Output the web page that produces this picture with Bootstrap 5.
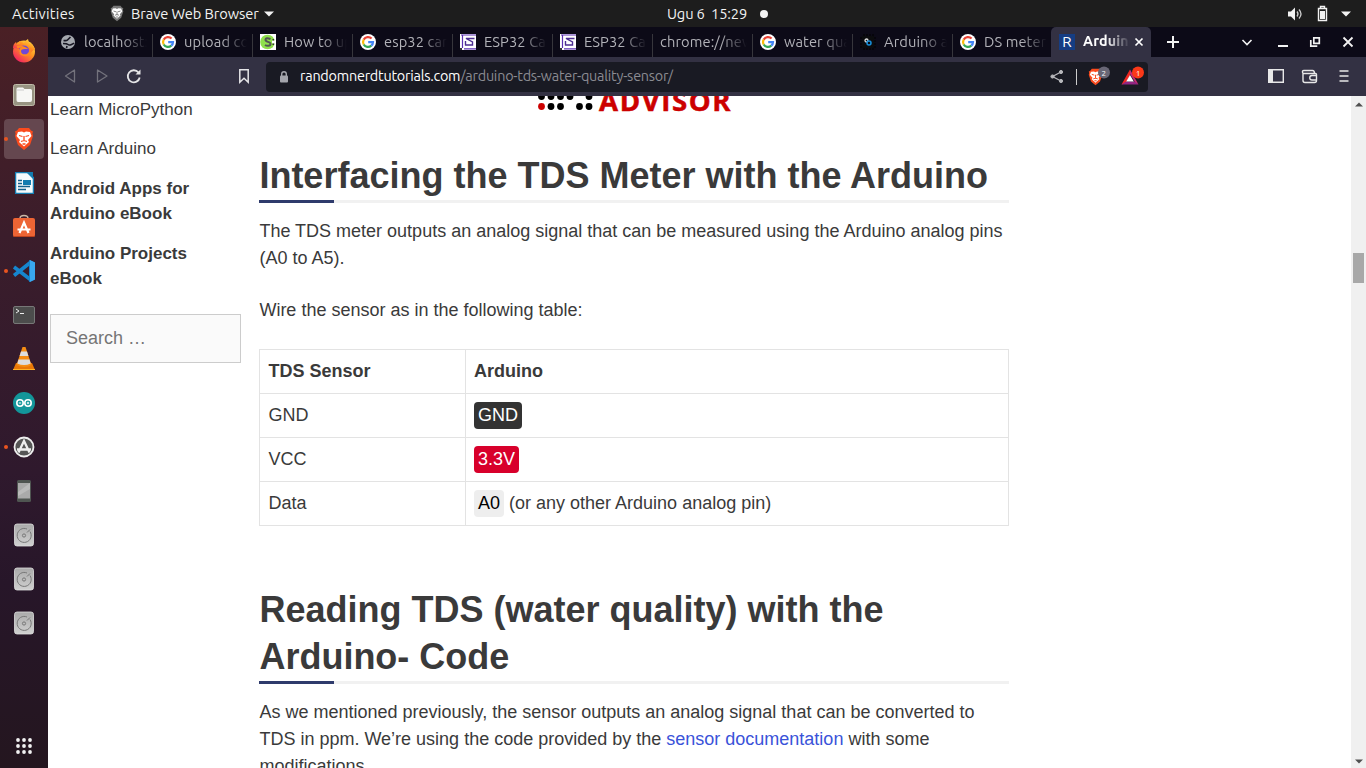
<!DOCTYPE html>
<html lang="en">
<head>
<meta charset="utf-8">
<meta name="viewport" content="width=device-width, initial-scale=1">
<title>Arduino TDS Water Quality Sensor</title>
<link href="https://cdn.jsdelivr.net/npm/bootstrap@5.3.0/dist/css/bootstrap.min.css" rel="stylesheet">
<style>
body{height:768px;font-family:"Liberation Sans",Arial,sans-serif;color:#3a3a3a;background:#fff}
svg{display:block;flex:none}
.ui{font-family:Ubuntu,"Noto Sans",sans-serif;white-space:nowrap}
.topbar{height:27px;background:#1d1d1d;color:#f2f2f2;font-size:14.67px;line-height:27px}
.topbar .act{margin-left:12px;width:98px;letter-spacing:.25px}
.topbar .app{margin-left:7px;width:133px;letter-spacing:-.08px}
.topbar .clock{margin-left:393px;width:93px;letter-spacing:-.15px}
.dock{width:48px;background:linear-gradient(#4a2025 0,#3b1d2b 28%,#2f192d 60%,#271629 75%,#24161f 100%)}
.dock .tile{width:40px;height:40px;margin:0 4px 4px;border-radius:4px}
.dock .tile.on{background:#65474f}
.dock .tile.run::before{content:"";position:absolute;left:0;top:18px;width:4px;height:4px;border-radius:50%;background:#e95420}
.tabs{height:30px;background:#0c0a17;color:#b2b2b8;font-size:14.67px;padding-left:5px}
.btab{width:100px;padding:0 6px 0 7px;position:relative}
.btab::after{content:"";position:absolute;right:0;top:7px;bottom:0;width:1px;background:#37363c}
.btab .ttl{margin-left:8px;flex:1;min-width:0;overflow:hidden;letter-spacing:.1px;-webkit-mask-image:linear-gradient(90deg,#000 60%,transparent);mask-image:linear-gradient(90deg,#000 60%,transparent)}
.btab.bare .ttl{margin-left:0;-webkit-mask-image:linear-gradient(90deg,#000 70%,transparent);mask-image:linear-gradient(90deg,#000 70%,transparent)}
.btab.cur{background:#333143;color:#fff;font-weight:600;font-size:14.3px;border-radius:5px 5px 0 0;margin-left:-2px;padding:0 7px 0 8px}
.btab.cur .ttl{-webkit-mask-image:linear-gradient(90deg,#000 50%,transparent);mask-image:linear-gradient(90deg,#000 50%,transparent)}
.btab.cur::after,.btab.last::after{display:none}
.rfav{width:16px;height:16px;background:#153d83;font-weight:400;font-size:15px;line-height:16px}
.tools{height:39px;background:#333143;color:#e8e8ea}
.url{height:30px;width:882px;background:#191a23;border-radius:4px;font-size:14.4px;padding-left:10px}
.url .addr{letter-spacing:-.23px}
.url .path{color:#8b8b92}
.page{height:672px}
.side{width:211px;padding:1px 0 0 2px;font-size:17px;line-height:25px}
.side p{margin:0 0 15px}
.side p:first-child{margin-bottom:14px}
.search{width:191px;height:49px;border:1px solid #ccc;border-radius:0;background:#fafafa;font-size:18px;padding:10px 15px;color:#757575;margin-top:23px}
.search::placeholder{color:#757575}
.article{width:750px;font-size:18px;line-height:27px}
.article p{margin:0 0 25px;padding-left:.4px}
.logo{height:56px;padding-left:278px}
.logo .word{font:700 27.6px/36px "Open Sans","Noto Sans",sans-serif;color:#c00;margin:-14px 0 0 6px;letter-spacing:1.6px;-webkit-text-stroke:.5px #c00}
.article h2{font-size:36px;line-height:47px;font-weight:700;margin:0 0 15px;padding:0 0 4px .4px;position:relative;color:#3a3a3a;border:0}
.article h2::before{content:"";position:absolute;left:0;right:0;bottom:0;height:3px;background:#f1f1f1}
.article h2::after{content:"";position:absolute;left:0;bottom:0;height:3px;width:75px;background:#2f3b6c}
.wiring{width:750px;border-collapse:separate;border-spacing:0;border:1px solid #e3e3e3;border-width:1px 0 0 1px;margin:0 0 60px;table-layout:fixed}
.wiring th,.wiring td{height:44px;padding:0 8px 0 8.4px;border:1px solid #e3e3e3;border-width:0 1px 1px 0}
.wiring th+th,.wiring td+td{padding-left:8px}
.pin{display:inline-block;border-radius:4px;padding:0 4px}
.sbar{width:15px;background:#f0f0f0;padding:6px 2px 4px}
.thumb{width:11px;height:30px;background:#a8a8a8;margin-top:146px}
a{color:#3a53d9;text-decoration:none}
</style>
</head>
<body class="d-flex flex-column overflow-hidden">
<svg width="0" height="0" class="position-absolute">
<defs>
<linearGradient id="fx" x1="1" y1="0" x2=".2" y2="1"><stop stop-color="#fff04a"/><stop offset=".5" stop-color="#ff9020"/><stop offset="1" stop-color="#f01867"/></linearGradient>
<linearGradient id="disk" x1="0" y1="0" x2="0" y2="1"><stop stop-color="#aaa"/><stop offset="1" stop-color="#d0d0d0"/></linearGradient>
<symbol id="g" viewBox="0 0 16 16"><circle cx="8" cy="8" r="8" fill="#fff"/><g fill="none" stroke-width="2.2"><path d="M11.6 4.6A5 5 0 0 0 3.7 5.6" stroke="#ea4335"/><path d="M3.7 5.6a5 5 0 0 0 0 4.9" stroke="#fbbc05"/><path d="M3.7 10.5a5 5 0 0 0 7.6 1.2" stroke="#34a853"/><path d="M11.3 11.7A5 5 0 0 0 13 8.1H8.2" stroke="#4285f4"/></g></symbol>
<symbol id="s" viewBox="0 0 16 16"><path fill="#fff" d="M0 0h16v16H0z"/><path d="M2.500 1v13M1 1h15M4 14.800h12" stroke="#5a2fb0" stroke-width="1.200"/><path d="M14.500 4.500H6l6.500 3.500v3H5M5.500 7v4.500" fill="none" stroke="#4b2d91" stroke-width="1.400"/><path fill="#333" d="M0 14h2v2H0z"/></symbol>
<symbol id="lion" viewBox="0 0 20 24"><path d="M5 1h10l2 2.500 2 1-.6 2L19 9l-3 9-6 5-6-5L1 9l.6-2.500-.6-2 2-1z"/><path fill="#fff" d="M4 5l4-.5 2 1 2-1 4 .5 1.500 4-3.500 4 1 2-5 4.500L5 15l1-2-3.500-4z"/><path fill="none" stroke="currentColor" stroke-width="1.300" d="M5 8.500l3.500 1M15 8.500l-3.500 1M10 9v5M7 14.500l3-1 3 1M8.500 17h3"/></symbol>
<symbol id="hdd" viewBox="0 0 40 40"><rect x="10.500" y="9" width="19" height="22" rx="2.500" fill="url(#disk)" stroke="#dedede" stroke-width=".8"/><path d="M26 16.500A7 7 0 1 1 23 14M26 14.500l-3 3" fill="none" stroke="#777" stroke-width="1"/><circle cx="20" cy="20.500" r="1.600" fill="none" stroke="#777"/></symbol>
</defs>
</svg>

<header class="topbar ui d-flex align-items-center flex-shrink-0">
  <span class="act">Activities</span>
  <svg width="14" height="17" color="#777" fill="#777"><use href="#lion"/></svg>
  <span class="app">Brave Web Browser</span>
  <svg width="10" height="6" fill="#f2f2f2"><path d="M0 .5h10L5 5.500z"/></svg>
  <span class="clock">Ugu 6&nbsp; 15:29</span>
  <svg width="8" height="8" fill="#f2f2f2"><circle cx="4" cy="4" r="4"/></svg>
  <svg class="ms-auto" width="66" height="18" fill="#f2f2f2"><path d="M1 6.500h3l4-4v13l-4-4H1z"/><path d="M10 6.500q2 2.500 0 5M12 4.500q4 4.500 0 9" fill="none" stroke="#ccc" stroke-width="1.300"/><path d="M31.500 3.500h8v12h-8zM33.500 3.500v-2h4v2" fill="none" stroke="#f2f2f2" stroke-width="1.400"/><path d="M33 6h5v8h-5zM54 6.500h10l-5 5z"/></svg>
  <span style="width:13px"></span>
</header>

<div class="d-flex flex-grow-1 overflow-hidden">
  <nav class="dock d-flex flex-column flex-shrink-0">
    <div class="tile position-relative mt-1"><svg width="40" height="40"><circle cx="20" cy="20.500" r="11" fill="url(#fx)"/><path fill="url(#fx)" d="M9 17q0-4 3-6l1 3 3-1-1-3q5 1 6 4l-4 4zM20 12q2-3 4-4l1 4 3 1 3 5-5 4z"/><circle cx="20" cy="19.500" r="5" fill="#7047d6"/><path d="M13 16q5-1 8 1-5 0-5 3 0 5 7 4 5-2 3-7" fill="none" stroke="#ff8a20" stroke-width="2"/></svg></div>
    <div class="tile position-relative"><svg width="40" height="40"><rect x="9.500" y="9.500" width="21" height="21" rx="2" fill="#989482" stroke="#c0bca9"/><path fill="#f7f7f5" d="M12.500 14q0-1.500 1.500-1.500h5l1.500 1.500h6q1.500 0 1.500 1.500V25q0 2-2 2H14q-1.500 0-1.500-2z"/><path d="M13 15h7" stroke="#ccc"/></svg></div>
    <div class="tile on run position-relative"><svg width="40" height="40" color="#fb4b1d" fill="#fb4b1d"><use href="#lion" x="10" y="8" width="20" height="24"/></svg></div>
    <div class="tile position-relative"><svg width="40" height="40"><path fill="#f5fafc" stroke="#1680b5" stroke-width="1.300" d="M11.600 9.600h13l4.800 5v15.800H11.600z"/><path fill="#147cb0" d="M22 9h7v7z"/><path d="M14 17.500h4M14 20.500h4M14 23.500h12M14 26.500h8" stroke="#16618c" stroke-width="1.400"/><path fill="#147cb0" d="M19 17h8v5h-8z"/></svg></div>
    <div class="tile position-relative"><svg width="40" height="40"><path d="M16 11.500q0-3 4-3t4 3" fill="none" stroke="#ccb9a7" stroke-width="1.400"/><rect x="9" y="11" width="22" height="19" rx="2" fill="#ed6434"/><path d="M9.500 29.500h21" stroke="#bd421e"/><path d="M15.500 26l4.500-10.500L24.500 26M13.500 22.500h13" fill="none" stroke="#fff" stroke-width="2.200"/></svg></div>
    <div class="tile run position-relative"><svg width="40" height="40"><path d="M27 11L10 24.500M10 16l17 13" stroke="#1686cf" stroke-width="3.600"/><path fill="#1686cf" d="M25 9l6 2.500v17L25 31z"/><path fill="#39a8ef" d="M26 9l5 2.500v17L26 31z"/></svg></div>
    <div class="tile position-relative"><svg width="40" height="40"><rect x="9.500" y="11.500" width="21" height="17" rx="1.500" fill="#4c4c4c" stroke="#777"/><path d="M12 14l3 2-3 2M16 18.500h4" fill="none" stroke="#eee"/></svg></div>
    <div class="tile position-relative"><svg width="40" height="40"><path fill="#e97807" d="M12 24h16l3 7H9z"/><path fill="#f58d13" d="M18.500 8h3l6 18q-7 4-15 0z"/><path fill="#ddd" d="M17 12.500h6l1.400 4.500h-8.800zM14.500 20.500h11l1.200 4q-6.700 3-13.400 0z"/><path d="M9 30.500h22" stroke="#ffb226"/></svg></div>
    <div class="tile position-relative"><svg width="40" height="40"><circle cx="20" cy="20" r="11" fill="#13969a"/><g fill="none" stroke="#fff" stroke-width="1.600"><circle cx="16" cy="20" r="3.200"/><circle cx="24" cy="20" r="3.200"/></g><path d="M14.800 20h2.400M22.800 20h2.400M24 18.800v2.400" stroke="#fff"/></svg></div>
    <div class="tile run position-relative"><svg width="40" height="40"><circle cx="20" cy="20" r="9.500" fill="#555" stroke="#eee" stroke-width="1.800"/><path d="M14.500 25.500l5.500-11.500 5.500 11.500M13 22.500h14" fill="none" stroke="#eee" stroke-width="2.300"/></svg></div>
    <div class="tile position-relative"><svg width="40" height="40"><rect x="13" y="9" width="14" height="22" rx="1.500" fill="#4f5551"/><path fill="#aaa" d="M14 12h12v15.500H14z"/><path fill="#bbb" d="M26 12v6l-12 7v-4z"/></svg></div>
    <div class="tile position-relative"><svg width="40" height="40"><use href="#hdd"/></svg></div>
    <div class="tile position-relative"><svg width="40" height="40"><use href="#hdd"/></svg></div>
    <div class="tile position-relative"><svg width="40" height="40"><use href="#hdd"/></svg></div>
    <div class="mt-auto px-1 pb-1"><svg width="40" height="36" fill="#f2f2f2"><g id="dots"><circle cx="14" cy="12" r="1.900"/><circle cx="20" cy="12" r="1.900"/><circle cx="26" cy="12" r="1.900"/></g><use href="#dots" y="6"/><use href="#dots" y="12"/></svg></div>
  </nav>

  <div class="d-flex flex-column flex-grow-1 overflow-hidden">
    <div class="tabs ui d-flex flex-shrink-0">
      <div class="btab d-flex align-items-center"><svg width="16" height="16"><circle cx="8" cy="8" r="7" fill="#a5a8af"/><path d="M3.500 6.500q3 .5 4-.5t3-3M3 9.500q4 0 5 1t3 .2 3-1.500M6.500 14l.5-2" fill="none" stroke="#171522" stroke-width="1.600"/></svg><span class="ttl">localhost:8080</span></div>
      <div class="btab d-flex align-items-center"><svg width="16" height="16"><use href="#g"/></svg><span class="ttl">upload code</span></div>
      <div class="btab d-flex align-items-center"><svg width="16" height="16"><path fill="#fff" d="M0 0h16v16H0z"/><circle cx="7.500" cy="8" r="7.300" fill="#8fe04b"/><path fill="#fff" d="M12 6.500h4v3h-4z"/><path d="M10.500 5q-5-2-5 .8c0 2.700 5 1.400 5 4.200 0 2.500-4 2-5.500 1" fill="none" stroke="#555" stroke-width="2"/><path fill="#333" d="M12.500 5h1.600v1.600h-1.600zM12.500 9.500h1.600v1.600h-1.600z"/></svg><span class="ttl">How to upload</span></div>
      <div class="btab d-flex align-items-center"><svg width="16" height="16"><use href="#g"/></svg><span class="ttl">esp32 camera</span></div>
      <div class="btab d-flex align-items-center"><svg width="16" height="16"><use href="#s"/></svg><span class="ttl">ESP32 Camera</span></div>
      <div class="btab d-flex align-items-center"><svg width="16" height="16"><use href="#s"/></svg><span class="ttl">ESP32 Camera</span></div>
      <div class="btab bare d-flex align-items-center"><span class="ttl">chrome://newtab</span></div>
      <div class="btab d-flex align-items-center"><svg width="16" height="16"><use href="#g"/></svg><span class="ttl">water quality</span></div>
      <div class="btab d-flex align-items-center"><svg width="16" height="16"><path d="M4 0v16M7 0v16M10 0v16M13 0v16M0 4h16M0 7h16M0 10h16M0 13h16" stroke="#000"/><rect x="2" y="2" width="12" height="12" rx="1" fill="#0b0c0e"/><circle cx="6.500" cy="6.500" r="1.500" fill="none" stroke="#ddd" stroke-width="1.300"/><circle cx="9" cy="9" r="2" fill="none" stroke="#168edb" stroke-width="1.500"/></svg><span class="ttl">Arduino and</span></div>
      <div class="btab last d-flex align-items-center"><svg width="16" height="16"><use href="#g"/></svg><span class="ttl">DS meter a</span></div>
      <div class="btab cur d-flex align-items-center"><span class="rfav d-flex flex-shrink-0 justify-content-center align-items-center">R</span><span class="ttl">Arduino</span><svg class="ms-1" width="10" height="10"><path d="M1.500 1.500l7 7M8.500 1.500l-7 7" stroke="#fff" stroke-width="1.700"/></svg></div>
      <svg width="215" height="30" fill="none" stroke="#f2f2f2" stroke-width="2"><path d="M22 9v12M16 15h12"/><path d="M91.500 13l4.500 4.500 4.500-4.500" stroke-width="1.600"/><path d="M127 19h10"/><path d="M162.800 10.800h5.500v5.500h-5.500zM159.800 13v6.200h6.500" stroke-width="1.700"/><path d="M192.500 10.500l9 9M201.500 10.500l-9 9" stroke-width="1.800"/></svg>
    </div>

    <div class="tools ui d-flex align-items-center flex-shrink-0">
      <svg width="218" height="39" fill="none" stroke="#e5e5e7" stroke-width="1.500"><path d="M26.500 13v12L17.500 19zM49.500 13v12l9.500-6z" stroke="#73727c" stroke-width="1.300" stroke-linejoin="round"/><path d="M90.500 15.500a6 6 0 1 0 1.200 5" stroke-width="1.800"/><path d="M92.500 12.500v5h-5z" fill="#e5e5e7" stroke="none"/><path d="M191.800 12.800h8.400v12.400l-4.200-4-4.200 4z"/></svg>
      <div class="url d-flex align-items-center">
        <svg width="16" height="16"><rect x="4" y="6.500" width="8" height="7" rx="1" fill="#a4a5ac"/><path d="M5.700 7V5a2.300 2.300 0 0 1 4.600 0v2" fill="none" stroke="#a4a5ac" stroke-width="1.400"/></svg>
        <span class="ms-2 addr"><span class="text-white">randomnerdtutorials.com</span><span class="path">/arduino-tds-water-quality-sensor/</span></span>
        <svg class="ms-auto" width="100" height="30"><g fill="#b7b7bb" stroke="#b7b7bb"><path d="M13 10L4.500 14.500l8.500 4.500" fill="none" stroke-width="1.300"/><circle cx="13" cy="10" r="1.600"/><circle cx="4.500" cy="14.500" r="1.600"/><circle cx="13" cy="19" r="1.600"/></g><path d="M28.500 7v16" stroke="#ccc"/><g color="#fb4b1d" fill="#fb4b1d"><use href="#lion" x="40" y="6" width="15" height="18"/></g><circle cx="56" cy="10.500" r="6" fill="#686675"/><text x="53.600" y="13.500" font-size="8" fill="#fff">2</text><path fill="#f02822" d="M82 7.500L73.500 22.500l4-1 4.500-8z"/><path fill="#912583" d="M73.500 22.500h17L87 19.500h-9z"/><path fill="#c72b74" d="M82 7.500L90.500 22.500 87 20l-5-8z"/><path fill="#fff" d="M82 13l3.800 6.500h-7.600z"/><circle cx="90" cy="10.500" r="6" fill="#fb3818"/><text x="87.700" y="13.500" font-size="8" fill="#fff">1</text></svg>
      </div>
      <svg class="flex-shrink-0" width="218" height="39" fill="none" stroke="#e8e8e8" stroke-width="1.400"><path d="M120.700 12.700h14.600v12.600h-14.600z"/><path fill="#e8e8e8" stroke="none" d="M120 12h5v14h-5z"/><path d="M155 16.500q-1.500-3 1-3h8.500q2 0 2 3h1q1 0 1 1v6q0 2-2 2h-9.500q-2 0-2-2zM155 16.500h12M169 18.500h-5a2.200 2.200 0 0 0 0 4.500h5"/><path d="M191.500 14h9M191.500 19h9M191.500 24h9" stroke-width="1.500"/></svg>
    </div>

    <div class="page d-flex overflow-hidden">
      <aside class="side flex-shrink-0">
        <p>Learn MicroPython</p>
        <p>Learn Arduino</p>
        <p><strong>Android Apps for<br>Arduino eBook</strong></p>
        <p><strong>Arduino Projects<br>eBook</strong></p>
        <input class="search form-control" type="text" placeholder="Search …">
      </aside>
      <main class="article flex-shrink-0">
        <div class="logo d-flex">
          <svg width="56" height="15"><g fill="#000"><circle cx="4.500" cy=".5" r="3.400"/><circle cx="14" cy=".5" r="3.400"/><circle cx="23.500" cy=".5" r="3.400"/><circle cx="33" cy=".5" r="3.400"/><circle cx="52" cy=".5" r="3.400"/><circle cx="14" cy="10.500" r="3.400"/><circle cx="23.500" cy="10.500" r="3.400"/><circle cx="42.500" cy="10.500" r="3.400"/><circle cx="52" cy="10.500" r="3.400"/></g><circle cx="4.500" cy="10.500" r="3.400" fill="#c00"/></svg>
          <span class="word">ADVISOR</span>
        </div>
        <h2>Interfacing the TDS Meter with the Arduino</h2>
        <p>The TDS meter outputs an analog signal that can be measured using the Arduino analog pins (A0 to A5).</p>
        <p>Wire the sensor as in the following table:</p>
        <table class="wiring">
          <colgroup><col style="width:206px"><col></colgroup>
          <tr><th>TDS Sensor</th><th>Arduino</th></tr>
          <tr><td>GND</td><td><span class="pin text-white" style="background:#333">GND</span></td></tr>
          <tr><td>VCC</td><td><span class="pin text-white" style="background:#d8002b">3.3V</span></td></tr>
          <tr><td>Data</td><td><span class="pin text-black" style="background:#eee">A0</span> (or any other Arduino analog pin)</td></tr>
        </table>
        <h2>Reading TDS (water quality) with the Arduino- Code</h2>
        <p>As we mentioned previously, the sensor outputs an analog signal that can be converted to TDS in ppm. We’re using the code provided by the <a href="#">sensor documentation</a> with some modifications.</p>
      </main>
      <div class="sbar ms-auto d-flex flex-column align-items-center">
        <svg width="8" height="5" fill="#505050"><path d="M0 4.500L4 .5l4 4z"/></svg>
        <div class="thumb"></div>
        <svg class="mt-auto" width="8" height="5" fill="#505050"><path d="M0 .5h8l-4 4z"/></svg>
      </div>
    </div>
  </div>
</div>
<script src="https://cdn.jsdelivr.net/npm/bootstrap@5.3.0/dist/js/bootstrap.bundle.min.js"></script>
</body>
</html>
